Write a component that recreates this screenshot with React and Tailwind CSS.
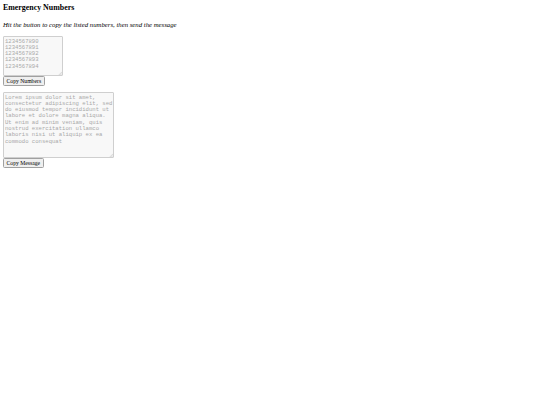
import React from "react";

const numbers = ["1234567890", "1234567891", "1234567892", "1234567893", "1234567894"];

const message = [
    "Lorem ipsum dolor sit amet,",
    "consectetur adipiscing elit, sed",
    "do eiusmod tempor incididunt ut",
    "labore et dolore magna aliqua.",
    "Ut enim ad minim veniam, quis",
    "nostrud exercitation ullamco",
    "laboris nisi ut aliquip ex ea",
    "commodo consequat",
];

const areaClass =
    "block resize-none border-[0.5px] border-[#cfcfcf] bg-[#f8f8f8] text-[#a8a8a8] px-[1px] pt-[1.5px] text-[5.6px] leading-[6.3px] whitespace-pre overflow-hidden rounded-[1px] font-['Liberation_Mono',monospace]";

const btnClass =
    "block h-[10px] px-[2.5px] border-[0.5px] border-[#a0a0a0] bg-[#efefef] rounded-[1.5px] text-[5.7px] leading-[6px] text-black";

// tiny resize grip, like the scaled-down browser one
const Grip = () => (
    <svg className="absolute right-[1px] bottom-[1px]" width="4" height="4" viewBox="0 0 4 4">
        <path d="M4 0.8 L0.8 4 M4 2.4 L2.4 4" stroke="#b5b5b5" strokeWidth="0.5" />
    </svg>
);

const App = () => {
    const copy = (text) => {
        navigator.clipboard?.writeText(text).catch(() => {});
    };

    return (
        <div className="min-h-screen bg-white text-black px-[3px] pt-[3px] font-['Liberation_Serif',serif]">
            <h3 className="text-[7.9px] leading-[9px] font-bold">Emergency Numbers</h3>
            <p className="mt-[9px] text-[6.75px] leading-[8px] italic">
                Hit the button to copy the listed numbers, then send the message
            </p>
            <div className="mt-[7px] flex flex-col items-start">
                <div className="relative">
                    <textarea readOnly value={numbers.join("\n")} className={`${areaClass} w-[60px] h-[40px]`} />
                    <Grip />
                </div>
                <button className={btnClass} onClick={() => copy(numbers.join("\n"))}>
                    Copy Numbers
                </button>
                <div className="relative mt-[6px]">
                    <textarea readOnly value={message.join("\n")} className={`${areaClass} w-[111px] h-[66px]`} />
                    <Grip />
                </div>
                <button className={btnClass} onClick={() => copy(message.join(" "))}>
                    Copy Message
                </button>
            </div>
        </div>
    );
};

export default App;
